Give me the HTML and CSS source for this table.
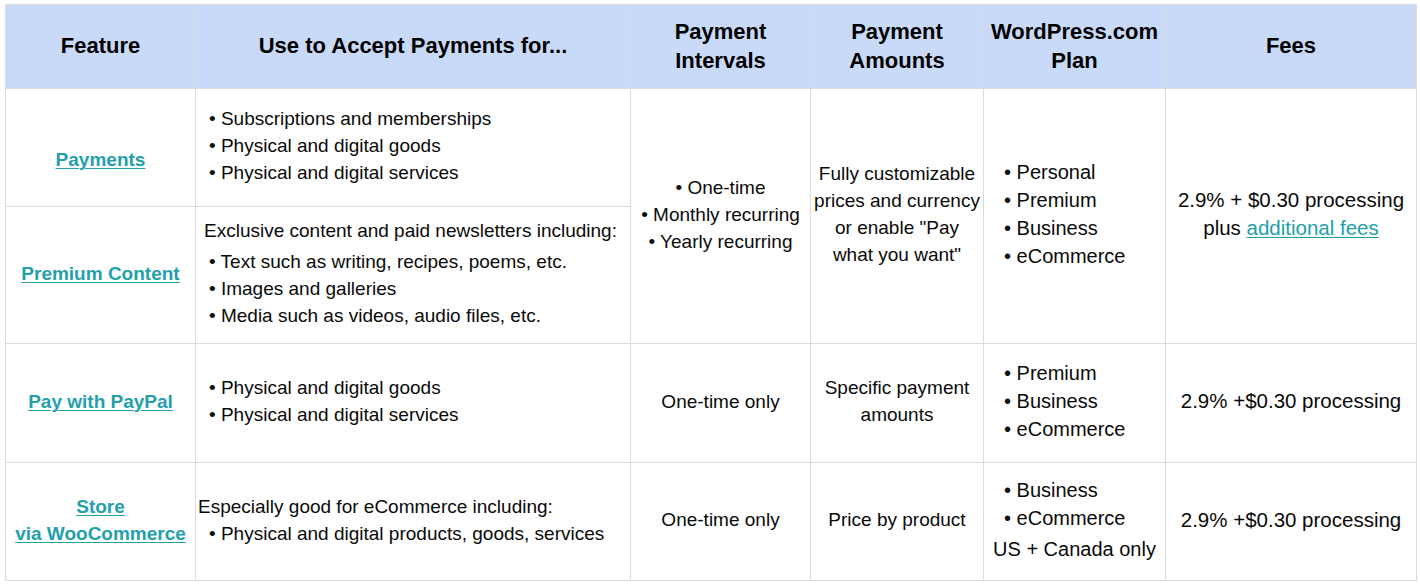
FILE: index.html
```html
<!DOCTYPE html>
<html lang="en">
<head>
<meta charset="utf-8">
<title>Payments comparison</title>
<link rel="stylesheet" href="styles.css">
</head>
<body>
<table class="grid">
  <colgroup>
    <col class="c1"><col class="c2"><col class="c3"><col class="c4"><col class="c5"><col class="c6">
  </colgroup>
  <thead>
    <tr class="head">
      <th>Feature</th>
      <th>Use to Accept Payments for...</th>
      <th>Payment<br>Intervals</th>
      <th>Payment<br>Amounts</th>
      <th>WordPress.com<br>Plan</th>
      <th>Fees</th>
    </tr>
  </thead>
  <tbody>
    <tr class="r1">
      <td class="feat feat-low"><a href="#">Payments</a></td>
      <td class="uses">
        <div class="b">• Subscriptions and memberships</div>
        <div class="b">• Physical and digital goods</div>
        <div class="b">• Physical and digital services</div>
      </td>
      <td class="ctr" rowspan="2">• One-time<br>• Monthly recurring<br>• Yearly recurring</td>
      <td class="ctr" rowspan="2">Fully customizable<br>prices and currency<br>or enable "Pay<br>what you want"</td>
      <td class="plan" rowspan="2">
        <div>• Personal</div><div>• Premium</div><div>• Business</div><div>• eCommerce</div>
      </td>
      <td class="fees" rowspan="2">2.9% + $0.30 processing<br>plus <a href="#">additional fees</a></td>
    </tr>
    <tr class="r2">
      <td class="feat"><a href="#">Premium Content</a></td>
      <td class="uses">
        <div class="intro">Exclusive content and paid newsletters including:</div>
        <div class="b">• Text such as writing, recipes, poems, etc.</div>
        <div class="b">• Images and galleries</div>
        <div class="b">• Media such as videos, audio files, etc.</div>
      </td>
    </tr>
    <tr class="r3">
      <td class="feat"><a href="#">Pay with PayPal</a></td>
      <td class="uses">
        <div class="b">• Physical and digital goods</div>
        <div class="b">• Physical and digital services</div>
      </td>
      <td class="ctr">One-time only</td>
      <td class="ctr">Specific payment<br>amounts</td>
      <td class="plan">
        <div>• Premium</div><div>• Business</div><div>• eCommerce</div>
      </td>
      <td class="fees">2.9% +$0.30 processing</td>
    </tr>
    <tr class="r4">
      <td class="feat"><a href="#">Store<br>via WooCommerce</a></td>
      <td class="uses">
        <div class="intro2">Especially good for eCommerce including:</div>
        <div class="b">• Physical and digital products, goods, services</div>
      </td>
      <td class="ctr">One-time only</td>
      <td class="ctr">Price by product</td>
      <td class="plan">
        <div>• Business</div><div>• eCommerce</div><div class="note">US + Canada only</div>
      </td>
      <td class="fees">2.9% +$0.30 processing</td>
    </tr>
  </tbody>
</table>
</body>
</html>
```

FILE: styles.css
```css
html, body {
  margin: 0;
  background: #ffffff;
}
body {
  padding: 4px 5px;
  font-family: "Liberation Sans", Arial, sans-serif;
  color: #0a0a0a;
}
.grid {
  border-collapse: collapse;
  table-layout: fixed;
  width: 1411px;
}
.c1 { width: 190px; }
.c2 { width: 435px; }
.c3 { width: 180px; }
.c4 { width: 173px; }
.c5 { width: 182px; }
.c6 { width: 251px; }

.grid th, .grid td {
  border: 1px solid #dadada;
  padding: 0;
  vertical-align: middle;
}
.head th {
  background: #c9daf8;
  height: 81px;
  padding-bottom: 2px;
  font-size: 22px;
  line-height: 29px;
  font-weight: bold;
  text-align: center;
  color: #000;
}
.grid td {
  font-size: 19px;
  line-height: 27px;
  padding-bottom: 4px;
}
.r1 td { height: 113px; }
.r2 td { height: 132px; }
.r3 td { height: 114px; }
.r4 td { height: 113px; }

.feat {
  text-align: center;
  font-weight: bold;
}
.r1 .feat-low {
  padding-top: 24px;
  padding-bottom: 0;
  height: 93px;
}
.grid a {
  color: #23a0aa;
  text-decoration: underline;
  text-decoration-thickness: 1px;
  text-underline-offset: 2px;
}
.uses { text-align: left; }
.uses .b { padding-left: 13px; }
.uses .intro { padding-left: 8px; margin-bottom: 4px; }
.uses .intro2 { padding-left: 2px; }
.ctr { text-align: center; }
.plan {
  text-align: left;
  line-height: 28px !important;
  font-size: 20px !important;
}
.plan div { padding-left: 20px; }
.plan .note { padding-left: 0; text-align: center; margin-top: 3px; }
.fees {
  text-align: center;
  font-size: 20.5px !important;
  line-height: 28px !important;
}
```
